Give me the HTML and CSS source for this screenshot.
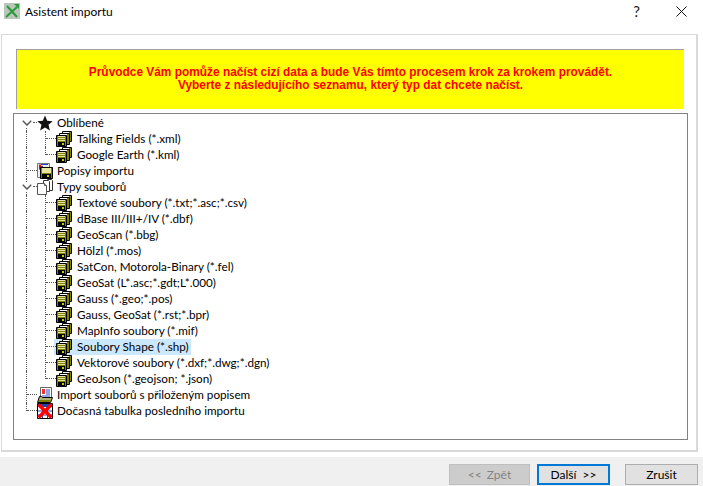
FILE: index.html
```html
<!DOCTYPE html>
<html lang="cs">
<head>
<meta charset="utf-8">
<title>Asistent importu</title>
<link rel="stylesheet" href="styles.css">
</head>
<body>
<svg class="defs" width="0" height="0" aria-hidden="true">
  <symbol id="floppy" viewBox="0 0 16 16">
    <path d="M6.500.5h9v10h-9z" fill="#fff" stroke="#000"/>
    <path d="M13 1h2v9h-2z" fill="#808000"/>
    <path d="M3.500 2.500h10v11h-10z" fill="#fff" stroke="#000"/>
    <path d="M11 3h2v10h-2z" fill="#808000"/>
    <path d="M.5 4.500h10v11H.5z" fill="#808000" stroke="#000"/>
    <path d="M2 5h7v5H2z" fill="#e6e6a0"/>
    <path d="M2 6.500h7M2 8.500h7" stroke="#808000"/>
    <path d="M2 11h7v4H2z" fill="#000"/>
    <path d="M6 12h2v2H6z" fill="#c8c800"/>
  </symbol>
  <symbol id="star" viewBox="0 0 16 16">
    <path d="M8 .5l2.200 5.300 5.500.4-4.200 3.600 1.400 5.700L8 12.400 3.100 15.500l1.400-5.700L.3 6.200l5.500-.4z" fill="#111"/>
  </symbol>
  <symbol id="desc" viewBox="0 0 16 16">
    <path d="M.5.5h12v14H.5z" fill="#eee" stroke="#777"/>
    <path d="M2 1.500h2v5H2z" fill="#e00"/>
    <path d="M4 1.500h7M4 3.500h2" stroke="#24c"/>
    <path d="M3.500 4.500h12v11h-12z" fill="#808000" stroke="#000"/>
    <path d="M5 5h9v5H5z" fill="#e6e6a0"/>
    <path d="M5 11h9v4H5z" fill="#000"/>
    <path d="M10 12h2v2h-2z" fill="#c8c800"/>
  </symbol>
  <symbol id="files" viewBox="0 0 16 16">
    <path d="M10.500.5h4l1 1v10h-5z" fill="#fff" stroke="#333"/>
    <path d="M6.500 1.500h5l1 1v10h-6z" fill="#fff" stroke="#333"/>
    <path d="M.5 4.500h7l2 2v9h-9z" fill="#fff" stroke="#555"/>
    <path d="M7.500 4.500v2h2" fill="#ddd" stroke="#555"/>
  </symbol>
  <symbol id="attach" viewBox="0 0 16 16">
    <path d="M3.500.5h11v10h-11z" fill="#fff" stroke="#666"/>
    <path d="M5 2h3v5H5z" fill="#e33"/>
    <path d="M9 3h4M9 5h4M9 7h4M5 9h8" stroke="#24c"/>
    <path d="M.5 15.500l2-6h2l1 1h10l-2 5z" fill="#b0b070" stroke="#000"/>
    <path d="M2 15h11l1-2H2z" fill="#808000"/>
  </symbol>
  <symbol id="temp" viewBox="0 0 16 16">
    <path d="M.5 .5h15v15H.5z" fill="#fff" stroke="#000"/>
    <path d="M1 1h14v3H1z" fill="#24a"/>
    <path d="M1 8h14M1 12h14M5.500 4v11M10.500 4v11" stroke="#24a"/>
    <path d="M1.500 1.500l13 13M14.500 1.500l-13 13" stroke="#f00" stroke-width="3.400"/>
  </symbol>
  <symbol id="chev" viewBox="0 0 10 6">
    <path d="M.8.800L5 5l4.200-4.200" fill="none" stroke="#595959" stroke-width="1.500"/>
  </symbol>
</svg>

<header class="titlebar">
  <svg class="app-icon" viewBox="0 0 16 16">
    <path d="M0 0h16v16H0z" fill="#b9c6ba"/>
    <path d="M2 14L13 4M3 3l10 11" stroke="#2a9a3a" stroke-width="2"/>
    <path d="M10 1h5v5z" fill="#2a9a3a"/>
  </svg>
  <span class="title">Asistent importu</span>
  <span class="help">?</span>
  <svg class="close" viewBox="0 0 11 11"><path d="M.5.500l10 10M10.500.500l-10 10" stroke="#111" fill="none"/></svg>
</header>

<main class="panel">
  <div class="banner">
    <p>Průvodce Vám pomůže načíst cizí data a bude Vás tímto procesem krok za krokem provádět.</p>
    <p>Vyberte z následujícího seznamu, který typ dat chcete načíst.</p>
  </div>
  <div class="tree">
    <div class="row"><span class="exp first"><svg class="chev"><use href="#chev"/></svg></span><span class="dash-0"></span><svg class="ico"><use href="#star"/></svg><span class="label">Oblíbené</span></div>
    <div class="row"><span class="v0"></span><span class="tee"></span><svg class="ico"><use href="#floppy"/></svg><span class="label child">Talking Fields (*.xml)</span></div>
    <div class="row"><span class="v0"></span><span class="ell"></span><svg class="ico"><use href="#floppy"/></svg><span class="label child">Google Earth (*.kml)</span></div>
    <div class="row"><span class="tee0"></span><svg class="ico"><use href="#desc"/></svg><span class="label">Popisy importu</span></div>
    <div class="row"><span class="exp"><svg class="chev"><use href="#chev"/></svg></span><span class="dash-0"></span><svg class="ico"><use href="#files"/></svg><span class="label">Typy souborů</span></div>
    <div class="row"><span class="v0"></span><span class="tee"></span><svg class="ico"><use href="#floppy"/></svg><span class="label child">Textové soubory (*.txt;*.asc;*.csv)</span></div>
    <div class="row"><span class="v0"></span><span class="tee"></span><svg class="ico"><use href="#floppy"/></svg><span class="label child">dBase III/III+/IV (*.dbf)</span></div>
    <div class="row"><span class="v0"></span><span class="tee"></span><svg class="ico"><use href="#floppy"/></svg><span class="label child">GeoScan (*.bbg)</span></div>
    <div class="row"><span class="v0"></span><span class="tee"></span><svg class="ico"><use href="#floppy"/></svg><span class="label child">Hölzl (*.mos)</span></div>
    <div class="row"><span class="v0"></span><span class="tee"></span><svg class="ico"><use href="#floppy"/></svg><span class="label child">SatCon, Motorola-Binary (*.fel)</span></div>
    <div class="row"><span class="v0"></span><span class="tee"></span><svg class="ico"><use href="#floppy"/></svg><span class="label child">GeoSat (L*.asc;*.gdt;L*.000)</span></div>
    <div class="row"><span class="v0"></span><span class="tee"></span><svg class="ico"><use href="#floppy"/></svg><span class="label child">Gauss (*.geo;*.pos)</span></div>
    <div class="row"><span class="v0"></span><span class="tee"></span><svg class="ico"><use href="#floppy"/></svg><span class="label child">Gauss, GeoSat (*.rst;*.bpr)</span></div>
    <div class="row"><span class="v0"></span><span class="tee"></span><svg class="ico"><use href="#floppy"/></svg><span class="label child">MapInfo soubory (*.mif)</span></div>
    <div class="row"><span class="v0"></span><span class="tee"></span><span class="sel"><svg class="ico"><use href="#floppy"/></svg><span class="label child">Soubory Shape (*.shp)</span></span></div>
    <div class="row"><span class="v0"></span><span class="tee"></span><svg class="ico"><use href="#floppy"/></svg><span class="label child">Vektorové soubory (*.dxf;*.dwg;*.dgn)</span></div>
    <div class="row"><span class="v0"></span><span class="ell"></span><svg class="ico"><use href="#floppy"/></svg><span class="label child">GeoJson (*.geojson; *.json)</span></div>
    <div class="row"><span class="tee0"></span><svg class="ico"><use href="#attach"/></svg><span class="label">Import souborů s přiloženým popisem</span></div>
    <div class="row"><span class="ell0"></span><svg class="ico"><use href="#temp"/></svg><span class="label">Dočasná tabulka posledního importu</span></div>
  </div>
</main>

<footer class="footer">
  <button class="btn back" disabled>&lt;&lt; Zpět</button>
  <button class="btn next">Další &gt;&gt;</button>
  <button class="btn cancel">Zrušit</button>
</footer>
</body>
</html>
```
FILE: styles.css
```css
* { box-sizing: border-box; }
html, body { margin: 0; height: 100%; }
body {
  width: 703px;
  height: 486px;
  overflow: hidden;
  background: #fff;
  font-family: "Lato", "Open Sans", sans-serif;
  font-size: 11.700px;
  color: #000;
  display: flex;
  flex-direction: column;
}
.defs { position: absolute; }

.titlebar {
  height: 34px;
  flex: none;
  display: flex;
  align-items: center;
  padding: 0 16px 12px 4px;
}
.app-icon { width: 16px; height: 16px; }
.title { margin-left: 5px; font-size: 12px; }
.help { margin-left: auto; margin-right: 36px; font-size: 15px; color: #222; }
.close { width: 11px; height: 11px; }

.panel {
  flex: none;
  height: 418px;
  margin: 0 5px 0 1px;
  border: 1px solid #d9d9d9;
  border-bottom-width: 2px;
  border-right-width: 2px;
  padding: 14px 8px 0 11px;
}
.banner {
  height: 60px;
  margin: 0 4px 0 3px;
  background: #ff0;
  border-top: 1px solid #a0a0a0;
  border-left: 1px solid #a0a0a0;
  color: #f00;
  font-family: "Liberation Sans", sans-serif;
  font-weight: 700;
  font-size: 11.900px;
  text-align: center;
  display: flex;
  flex-direction: column;
  justify-content: center;
  line-height: 13px;
  padding-bottom: 1px;
}
.banner p { margin: 0; }

.tree {
  height: 327px;
  margin-top: 4px;
  border: 1px solid #828282;
  padding: 1px 0 0 12px;
}
.row {
  height: 16px;
  display: flex;
  align-items: center;
}
.label { margin-left: 4px; padding-bottom: 2px; white-space: nowrap; }
.child { margin-left: 5px; }
.ico { width: 16px; height: 16px; flex: none; }

.exp {
  width: 12px;
  height: 16px;
  flex: none;
  display: flex;
  align-items: center;
  position: relative;
  margin-left: -4px;
  margin-right: 3px;
}
.chev { width: 10px; height: 6px; position: absolute; left: 0; top: 5px; }
.exp:not(.first)::before, .exp::after {
  content: "";
  position: absolute;
  left: 4px;
  border-left: 1px dotted #555;
}
.exp:not(.first)::before { top: 0; height: 3px; }
.exp::after { top: 13px; height: 3px; }
.dash-0 { width: 0; }
.exp + .dash-0 { width: 4px; height: 8px; margin-left: -4px; align-self: flex-start; border-bottom: 1px dotted #555; }

.v0 { width: 19px; height: 16px; flex: none; border-left: 1px dotted #555; }
.tee, .ell {
  width: 11px;
  height: 16px;
  flex: none;
  border-left: 1px dotted #555;
  position: relative;
}
.ell { height: 8px; align-self: flex-start; }
.tee::after, .ell::after {
  content: "";
  position: absolute;
  left: 0;
  top: 7px;
  width: 10px;
  border-top: 1px dotted #555;
}
.tee0, .ell0 {
  width: 11px;
  height: 16px;
  flex: none;
  border-left: 1px dotted #555;
  position: relative;
}
.ell0 { height: 8px; align-self: flex-start; }
.tee0::after, .ell0::after {
  content: "";
  position: absolute;
  left: 0;
  top: 7px;
  width: 10px;
  border-top: 1px dotted #555;
}
.sel {
  display: flex;
  align-items: center;
  height: 16px;
  background: #cce8ff;
  margin-left: -2px;
  padding-left: 2px;
  padding-right: 2px;
}

.footer {
  flex: 1;
  background: #f0f0f0;
  margin-top: 5px;
  display: flex;
  justify-content: flex-end;
  align-items: flex-start;
  padding: 7px 5px 0 0;
}
.btn {
  height: 21px;
  padding: 0;
  font: inherit;
  font-size: 12px;
  color: #000;
  background: #e1e1e1;
  border: 1px solid #adadad;
}
.back { width: 81px; margin-right: 7px; background: #ccc; border-color: #bfbfbf; color: #838383; word-spacing: 2px; }
.next { width: 73px; margin-right: 15px; border: 2px solid #0078d7; word-spacing: 3px; }
.cancel { width: 73px; }
```
